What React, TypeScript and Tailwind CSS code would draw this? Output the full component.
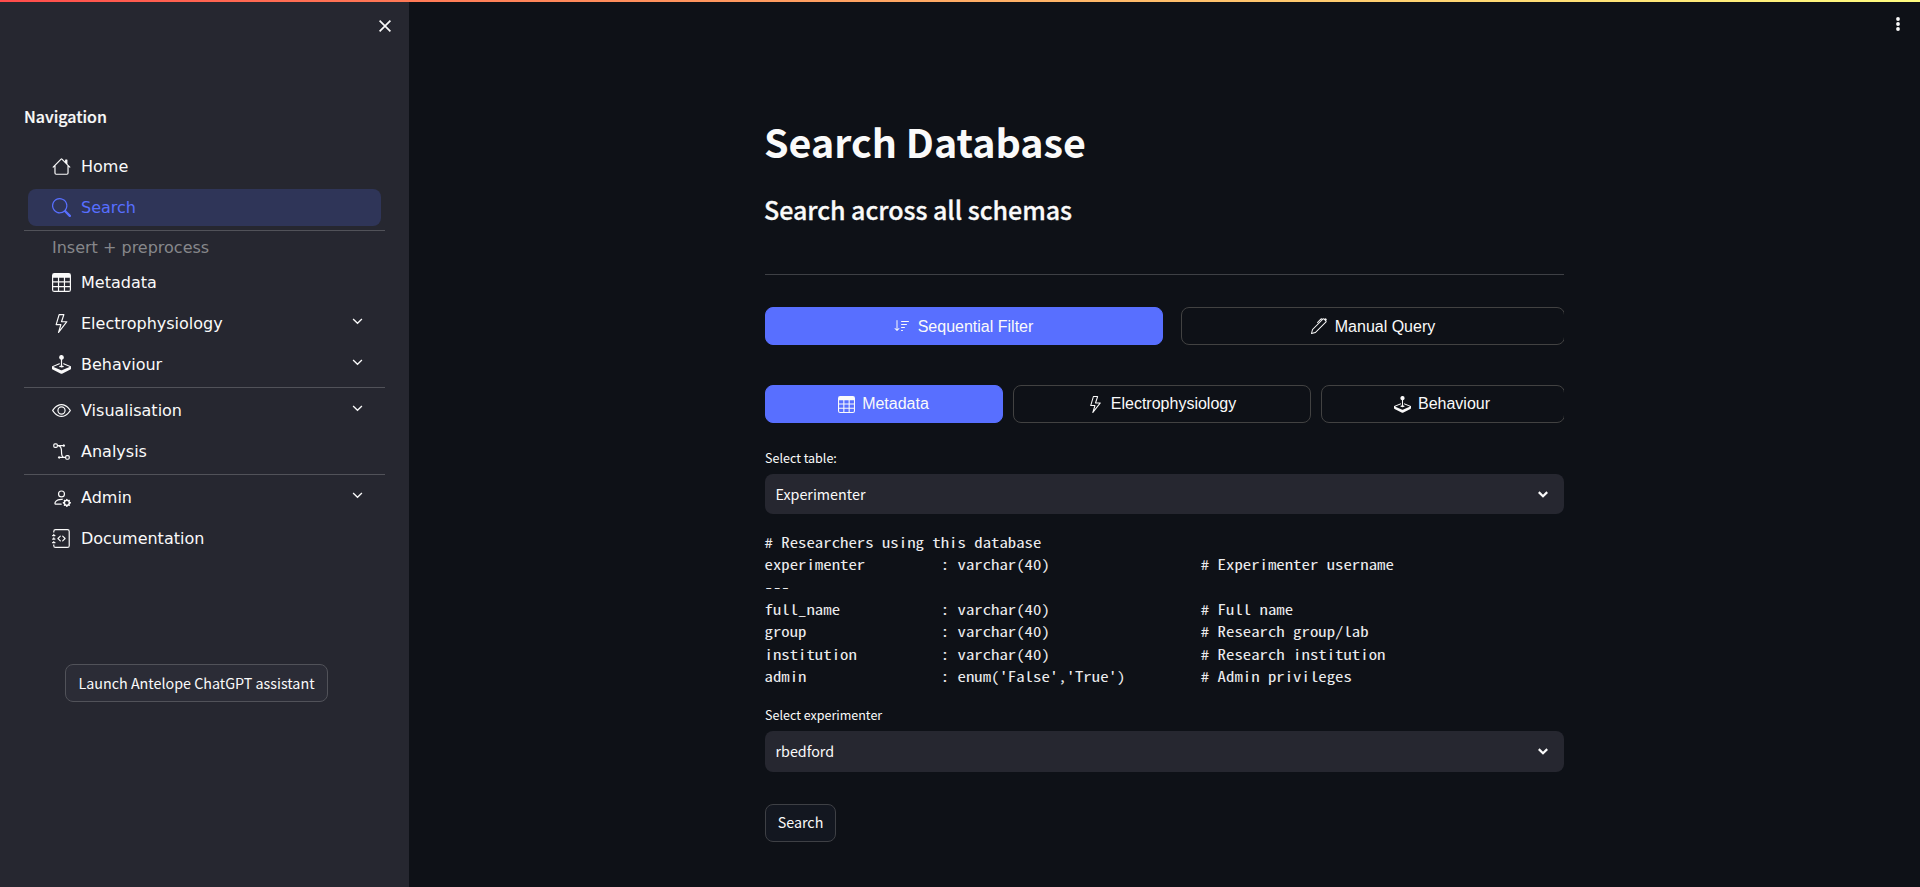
import type { ReactNode } from "react";
import type { IconType } from "react-icons";
import {
  BsHouse,
  BsSearch,
  BsTable,
  BsLightning,
  BsJoystick,
  BsEye,
  BsBezier2,
  BsPersonGear,
  BsJournalCode,
  BsSortDown,
  BsPen,
} from "react-icons/bs";

const SOURCE = "font-['Noto_Sans_CJK_SC',sans-serif]";

type NavItemProps = {
  icon: IconType;
  label: string;
  expandable?: boolean;
  active?: boolean;
};

function NavItem({ icon: Icon, label, expandable, active }: NavItemProps) {
  return (
    <li className="h-[41px] px-1 py-0.5">
      <a
        className={
          active
            ? "flex h-[37px] items-center rounded-lg bg-[#2f3558] pl-6 pr-[18px] text-[#586fff]"
            : "flex h-[37px] items-center rounded-lg pl-6 pr-[18px] text-[#fafafa]"
        }
      >
        <Icon className="mr-[10px] size-[19px] shrink-0" />
        <span className="flex-1 leading-6">{label}</span>
        {expandable && (
          <svg viewBox="0 0 11 7" className="mb-1 h-[7px] w-[11px]" fill="none" stroke="#fafafa" strokeWidth="1.3">
            <path d="M1.1 1 L5.5 5.3 L9.9 1" />
          </svg>
        )}
      </a>
    </li>
  );
}

function Divider({ className }: { className: string }) {
  return <li className={`h-px bg-[#515259] ${className}`} />;
}

type SegmentProps = {
  icon: IconType;
  iconClass: string;
  label: string;
  labelClass?: string;
  className: string;
  active?: boolean;
};

function Segment({ icon: Icon, iconClass, label, labelClass = "", className, active }: SegmentProps) {
  return (
    <button
      className={`flex h-[38px] shrink-0 items-center justify-center rounded-lg border font-['Liberation_Sans',sans-serif] text-base ${
        active
          ? "border-[#586fff] bg-[#586fff] text-[#fafafa]"
          : "border-[#424242] text-[#fafafa]"
      } ${className}`}
    >
      <Icon className={iconClass} />
      <span className={labelClass}>{label}</span>
    </button>
  );
}

function Chevron() {
  return (
    <svg viewBox="0 0 10 7" className="h-[7px] w-[10px]" fill="none" stroke="#fafafa" strokeWidth="2.2">
      <path d="M0.8 1.1 L5 5.2 L9.2 1.1" />
    </svg>
  );
}

function SelectBox({ children, className }: { children: ReactNode; className: string }) {
  return (
    <div
      className={`flex items-center justify-between rounded-lg bg-[#262730] pl-[10.5px] pr-4 text-[14.32px] text-[#fafafa] ${className}`}
    >
      <span className="mb-px">{children}</span>
      <Chevron />
    </div>
  );
}

const SCHEMA = [
  "# Researchers using this database",
  "experimenter         : varchar(40)                  # Experimenter username",
  "---",
  "full_name            : varchar(40)                  # Full name",
  "group                : varchar(40)                  # Research group/lab",
  "institution          : varchar(40)                  # Research institution",
  "admin                : enum('False','True')         # Admin privileges",
].join("\n");

export default function App() {
  return (
    <div className={`flex h-[887px] flex-col overflow-hidden bg-[#0e1117] text-[#fafafa] ${SOURCE}`}>
      <div className="h-0.5 shrink-0 bg-linear-to-r from-[#ff4b4b] to-[#fffd80]" />
      <div className="flex flex-1">
        <aside className="flex w-[409px] shrink-0 flex-col bg-[#262730] px-6">
          <div className="flex h-[48px] items-center justify-end">
            <svg viewBox="0 0 12 12" className="-mr-[6px] size-3" stroke="#fafafa" strokeWidth="1.7">
              <path d="M0.6 0.6 L11.4 11.4 M11.4 0.6 L0.6 11.4" />
            </svg>
          </div>
          <h2 className="mt-[53px] h-[26px] text-[16px] font-medium leading-[26px] [-webkit-text-stroke:0.2px]">
            Navigation
          </h2>
          <ul className="mt-[17px] flex w-[361px] flex-col font-['DejaVu_Sans',sans-serif] text-base">
            <NavItem icon={BsHouse} label="Home" />
            <NavItem icon={BsSearch} label="Search" active />
            <Divider className="mt-[2px]" />
            <li className="h-[31px] pl-7 pt-[5px] leading-6 text-[#86878b]">Insert + preprocess</li>
            <NavItem icon={BsTable} label="Metadata" />
            <NavItem icon={BsLightning} label="Electrophysiology" expandable />
            <NavItem icon={BsJoystick} label="Behaviour" expandable />
            <Divider className="my-0.5" />
            <NavItem icon={BsEye} label="Visualisation" expandable />
            <NavItem icon={BsBezier2} label="Analysis" />
            <Divider className="my-0.5" />
            <NavItem icon={BsPersonGear} label="Admin" expandable />
            <NavItem icon={BsJournalCode} label="Documentation" />
          </ul>
          <button className="ml-[41px] mt-[105px] h-[38px] w-[263px] rounded-lg border border-[#515259] bg-[#2b2c36] text-[14.32px]">
            Launch Antelope ChatGPT assistant
          </button>
        </aside>
        <main className="flex flex-1 flex-col">
          <div className="flex h-[44px] shrink-0 items-center justify-end pr-[20px]">
            <svg viewBox="0 0 4 14" className="h-[14px] w-1" fill="#fafafa">
              <circle cx="2" cy="2" r="1.9" />
              <circle cx="2" cy="7" r="1.9" />
              <circle cx="2" cy="12" r="1.9" />
            </svg>
          </div>
          <div className="ml-[356px] w-[799px]">
            <h1 className="-ml-px mt-[68px] h-[53px] text-[39.4px] font-bold leading-[53px]">Search Database</h1>
            <h2 className="-ml-px mt-[25px] h-[34px] text-[25px] font-medium leading-[34px] tracking-[-0.04px] [-webkit-text-stroke:0.3px]">
              Search across all schemas
            </h2>
            <div className="mt-[48px] h-px bg-[#3e4045]" />
            <div className="mt-[32px] flex gap-[18px] overflow-hidden">
              <Segment
                icon={BsSortDown}
                iconClass="mr-[8px] size-4"
                label="Sequential Filter"
                labelClass="mt-0.5"
                className="w-[398px] pr-px"
                active
              />
              <Segment
                icon={BsPen}
                iconClass="mr-[8px] size-4"
                label="Manual Query"
                labelClass="mt-0.5"
                className="w-[384px]"
              />
            </div>
            <div className="mt-[40px] flex gap-[10px] overflow-hidden">
              <Segment
                icon={BsTable}
                iconClass="mr-[7px] size-[17px]"
                label="Metadata"
                className="w-[238px] pr-px"
                active
              />
              <Segment
                icon={BsLightning}
                iconClass="mr-[7px] size-[17px]"
                label="Electrophysiology"
                className="w-[298px] pr-px"
              />
              <Segment
                icon={BsJoystick}
                iconClass="mr-[7px] size-[17px]"
                label="Behaviour"
                className="w-[244px] pr-0.5"
              />
            </div>
            <label className="mt-[24px] block h-[27px] text-[12.53px] leading-[21px]">Select table:</label>
            <SelectBox className="h-[40px]">Experimenter</SelectBox>
            <div className="-ml-[0.5px] mt-[16.5px] h-[157.5px]">
              <pre className="origin-top scale-y-[0.83] font-['Noto_Sans_Mono_CJK_SC','Liberation_Mono',monospace] text-[16.8px] leading-[26.99px] text-[#ececee]">
                {SCHEMA}
              </pre>
            </div>
            <label className="mt-[16px] block h-[27px] text-[12.53px] leading-[21px]">Select experimenter</label>
            <SelectBox className="h-[41px]">rbedford</SelectBox>
            <button className="mt-8 h-[38px] w-[71px] rounded-lg border border-[#3e4045] bg-[#131720] pb-0.5 text-[14.32px]">
              Search
            </button>
          </div>
        </main>
      </div>
    </div>
  );
}
